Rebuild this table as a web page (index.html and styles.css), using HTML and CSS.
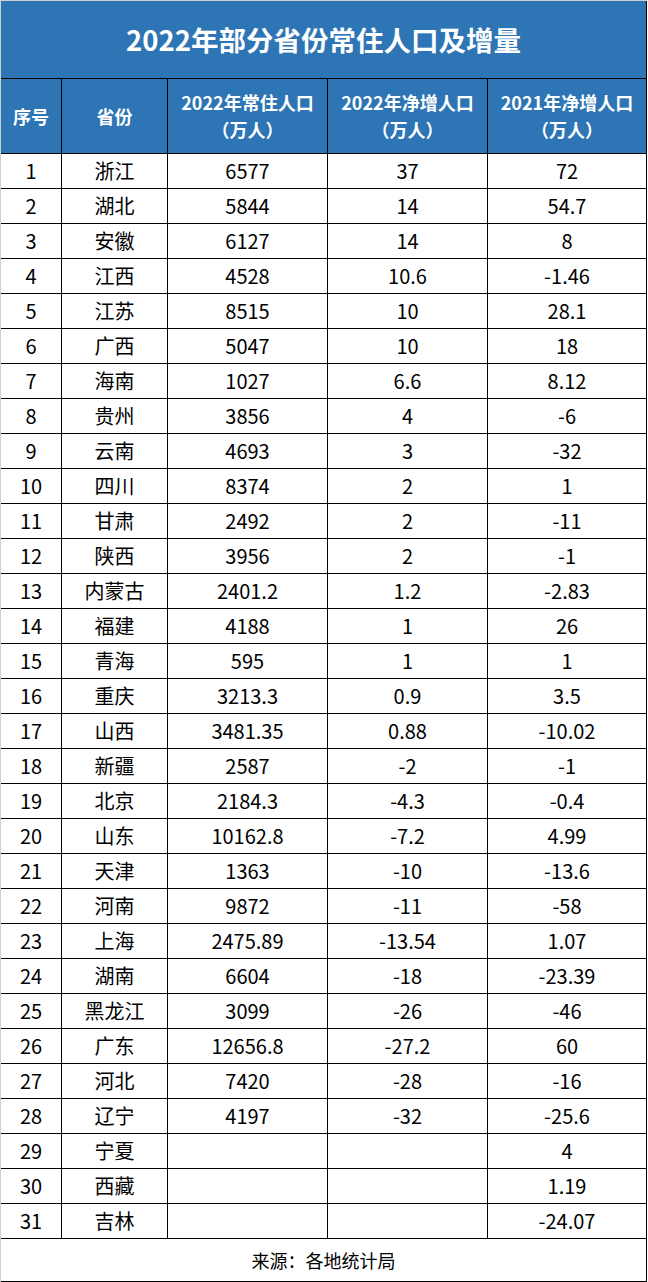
FILE: index.html
```html
<!DOCTYPE html>
<html lang="zh-CN">
<head>
<meta charset="utf-8">
<title>2022年部分省份常住人口及增量</title>
<link rel="stylesheet" href="styles.css">
</head>
<body>
<div class="sheet">
  <div class="title">2022年部分省份常住人口及增量</div>
  <div class="grid">
    <div class="c h">序号</div>
    <div class="c h">省份</div>
    <div class="c h">2022年常住人口<br>（万人）</div>
    <div class="c h">2022年净增人口<br>（万人）</div>
    <div class="c h">2021年净增人口<br>（万人）</div>

    <div class="c">1</div><div class="c">浙江</div><div class="c">6577</div><div class="c">37</div><div class="c">72</div>
    <div class="c">2</div><div class="c">湖北</div><div class="c">5844</div><div class="c">14</div><div class="c">54.7</div>
    <div class="c">3</div><div class="c">安徽</div><div class="c">6127</div><div class="c">14</div><div class="c">8</div>
    <div class="c">4</div><div class="c">江西</div><div class="c">4528</div><div class="c">10.6</div><div class="c">-1.46</div>
    <div class="c">5</div><div class="c">江苏</div><div class="c">8515</div><div class="c">10</div><div class="c">28.1</div>
    <div class="c">6</div><div class="c">广西</div><div class="c">5047</div><div class="c">10</div><div class="c">18</div>
    <div class="c">7</div><div class="c">海南</div><div class="c">1027</div><div class="c">6.6</div><div class="c">8.12</div>
    <div class="c">8</div><div class="c">贵州</div><div class="c">3856</div><div class="c">4</div><div class="c">-6</div>
    <div class="c">9</div><div class="c">云南</div><div class="c">4693</div><div class="c">3</div><div class="c">-32</div>
    <div class="c">10</div><div class="c">四川</div><div class="c">8374</div><div class="c">2</div><div class="c">1</div>
    <div class="c">11</div><div class="c">甘肃</div><div class="c">2492</div><div class="c">2</div><div class="c">-11</div>
    <div class="c">12</div><div class="c">陕西</div><div class="c">3956</div><div class="c">2</div><div class="c">-1</div>
    <div class="c">13</div><div class="c">内蒙古</div><div class="c">2401.2</div><div class="c">1.2</div><div class="c">-2.83</div>
    <div class="c">14</div><div class="c">福建</div><div class="c">4188</div><div class="c">1</div><div class="c">26</div>
    <div class="c">15</div><div class="c">青海</div><div class="c">595</div><div class="c">1</div><div class="c">1</div>
    <div class="c">16</div><div class="c">重庆</div><div class="c">3213.3</div><div class="c">0.9</div><div class="c">3.5</div>
    <div class="c">17</div><div class="c">山西</div><div class="c">3481.35</div><div class="c">0.88</div><div class="c">-10.02</div>
    <div class="c">18</div><div class="c">新疆</div><div class="c">2587</div><div class="c">-2</div><div class="c">-1</div>
    <div class="c">19</div><div class="c">北京</div><div class="c">2184.3</div><div class="c">-4.3</div><div class="c">-0.4</div>
    <div class="c">20</div><div class="c">山东</div><div class="c">10162.8</div><div class="c">-7.2</div><div class="c">4.99</div>
    <div class="c">21</div><div class="c">天津</div><div class="c">1363</div><div class="c">-10</div><div class="c">-13.6</div>
    <div class="c">22</div><div class="c">河南</div><div class="c">9872</div><div class="c">-11</div><div class="c">-58</div>
    <div class="c">23</div><div class="c">上海</div><div class="c">2475.89</div><div class="c">-13.54</div><div class="c">1.07</div>
    <div class="c">24</div><div class="c">湖南</div><div class="c">6604</div><div class="c">-18</div><div class="c">-23.39</div>
    <div class="c">25</div><div class="c">黑龙江</div><div class="c">3099</div><div class="c">-26</div><div class="c">-46</div>
    <div class="c">26</div><div class="c">广东</div><div class="c">12656.8</div><div class="c">-27.2</div><div class="c">60</div>
    <div class="c">27</div><div class="c">河北</div><div class="c">7420</div><div class="c">-28</div><div class="c">-16</div>
    <div class="c">28</div><div class="c">辽宁</div><div class="c">4197</div><div class="c">-32</div><div class="c">-25.6</div>
    <div class="c">29</div><div class="c">宁夏</div><div class="c"></div><div class="c"></div><div class="c">4</div>
    <div class="c">30</div><div class="c">西藏</div><div class="c"></div><div class="c"></div><div class="c">1.19</div>
    <div class="c">31</div><div class="c">吉林</div><div class="c"></div><div class="c"></div><div class="c">-24.07</div>
  </div>
  <div class="foot">来源：各地统计局</div>
</div>
</body>
</html>
```
FILE: styles.css
```css
html, body {
  margin: 0;
  padding: 0;
  background: #ffffff;
}
body {
  font-family: "Noto Sans CJK SC", "Noto Sans", sans-serif;
  color: #000000;
}
.sheet {
  width: 647px;
  box-sizing: border-box;
  border-top: 1px solid #d0d0d0;
  border-left: 1px solid #d0d0d0;
}
.title {
  height: 78px;
  box-sizing: border-box;
  background: #2e75b6;
  color: #ffffff;
  font-size: 27.5px;
  font-weight: 700;
  display: flex;
  align-items: center;
  justify-content: center;
  border-right: 1px solid #000;
  border-bottom: 1px solid #000;
  padding-bottom: 1px;
}
.grid {
  display: grid;
  grid-template-columns: 61px 106px 160px 160px 159px;
  grid-template-rows: 75px;
  grid-auto-rows: 35px;
}
.c {
  box-sizing: border-box;
  border-right: 1px solid #000;
  border-bottom: 1px solid #000;
  display: flex;
  align-items: center;
  justify-content: center;
  text-align: center;
  font-size: 20px;
  line-height: 24px;
  white-space: nowrap;
}
.h {
  background: #2e75b6;
  color: #ffffff;
  font-weight: 700;
  font-size: 18px;
  line-height: 27px;
}
.foot {
  height: 43px;
  box-sizing: border-box;
  border-right: 1px solid #000;
  border-bottom: 1px solid #000;
  display: flex;
  align-items: center;
  justify-content: center;
  font-size: 18px;
}
```
